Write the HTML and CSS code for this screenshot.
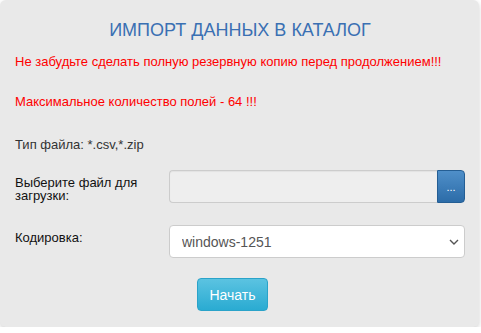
FILE: index.html
```html
<!DOCTYPE html>
<html>

<head>
  <title>Импорт данных в каталог</title>
  <link rel="stylesheet" href="styles.css">
</head>

<body>
  <div class="panel">
    <h1 class="title">ИМПОРТ ДАННЫХ В КАТАЛОГ</h1>
    <p class="warning">Не забудьте сделать полную резервную копию перед продолжением!!!</p>
    <p class="warning second">Максимальное количество полей - 64 !!!</p>
    <p class="file-type">Тип файла: *.csv,*.zip</p>

    <form class="import-form">
      <div class="row">
        <label class="row-label" for="fileName">Выберите файл для загрузки:</label>
        <div class="file-group">
          <input type="text" id="fileName" class="file-input" readonly>
          <button type="button" class="browse-button">...</button>
        </div>
      </div>
      <div class="row">
        <label class="row-label" for="encoding">Кодировка:</label>
        <div class="select-wrap">
          <select id="encoding" class="select">
            <option>windows-1251</option>
            <option>utf-8</option>
          </select>
          <svg class="select-arrow" width="10" height="6" viewBox="0 0 10 6">
            <path d="M1 1 L5 5 L9 1" fill="none" stroke="#555" stroke-width="1.4"/>
          </svg>
        </div>
      </div>
      <div class="actions">
        <button type="submit" class="start-button">Начать</button>
      </div>
    </form>
  </div>
</body>

</html>
```

FILE: styles.css
```css
body {
  font-family: "Liberation Sans", Arial, sans-serif;
  font-size: 13px;
  color: #333333;
  background-color: #ffffff;
  margin: 0;
  padding: 0;
}

.panel {
  width: 479px;
  height: 327px;
  box-sizing: border-box;
  padding: 18px 14px 15px 15px;
  background-color: #e9e9e9;
  border-radius: 6px;
  box-shadow: 0 2px 5px rgba(0, 0, 0, 0.18);
}

.title {
  margin: 0 0 11px 0;
  font-size: 18px;
  font-weight: normal;
  line-height: 24px;
  color: #3a70b3;
  text-align: center;
}

.warning {
  margin: 0;
  color: #ff0000;
  line-height: 18px;
}

.warning.second {
  margin-top: 22px;
}

.file-type {
  margin: 25px 0 0 0;
  line-height: 18px;
}

.import-form {
  margin-top: 16px;
}

.row {
  display: flex;
  margin-bottom: 22px;
}

.row-label {
  width: 154px;
  flex-shrink: 0;
  padding-top: 6px;
  line-height: 13px;
  color: #111111;
}

.file-group {
  flex: 1;
  display: flex;
  height: 33px;
}

.file-input {
  flex: 1;
  min-width: 0;
  height: 33px;
  box-sizing: border-box;
  margin: 0;
  border: 1px solid #cccccc;
  border-right: none;
  border-radius: 4px 0 0 4px;
  background-color: #eeeeee;
  box-shadow: inset 0 1px 1px rgba(0, 0, 0, 0.05);
}

.browse-button {
  width: 28px;
  height: 33px;
  margin: 0;
  padding: 0;
  border: 1px solid #245e94;
  border-radius: 0 4px 4px 0;
  background: linear-gradient(#4f8fc9, #2c6ca8);
  color: #ffffff;
  font-size: 11px;
  font-family: "Liberation Sans", Arial, sans-serif;
  cursor: pointer;
}

.select-wrap {
  flex: 1;
  position: relative;
}

.select {
  width: 100%;
  height: 33px;
  padding: 0 12px;
  margin: 0;
  box-sizing: border-box;
  border: 1px solid #cccccc;
  border-radius: 4px;
  background-color: #ffffff;
  font-family: "Liberation Sans", Arial, sans-serif;
  font-size: 14px;
  color: #555555;
  appearance: none;
  -webkit-appearance: none;
}

.select-arrow {
  position: absolute;
  right: 6px;
  top: 14px;
  pointer-events: none;
}

.actions {
  margin-top: -2px;
  padding-left: 182px;
}

.start-button {
  width: 71px;
  height: 33px;
  padding: 0;
  border: 1px solid #2aa3c9;
  border-radius: 4px;
  background: linear-gradient(#5bc3e1, #2aabd2);
  color: #ffffff;
  font-family: "Liberation Sans", Arial, sans-serif;
  font-size: 14px;
  cursor: pointer;
}
```
